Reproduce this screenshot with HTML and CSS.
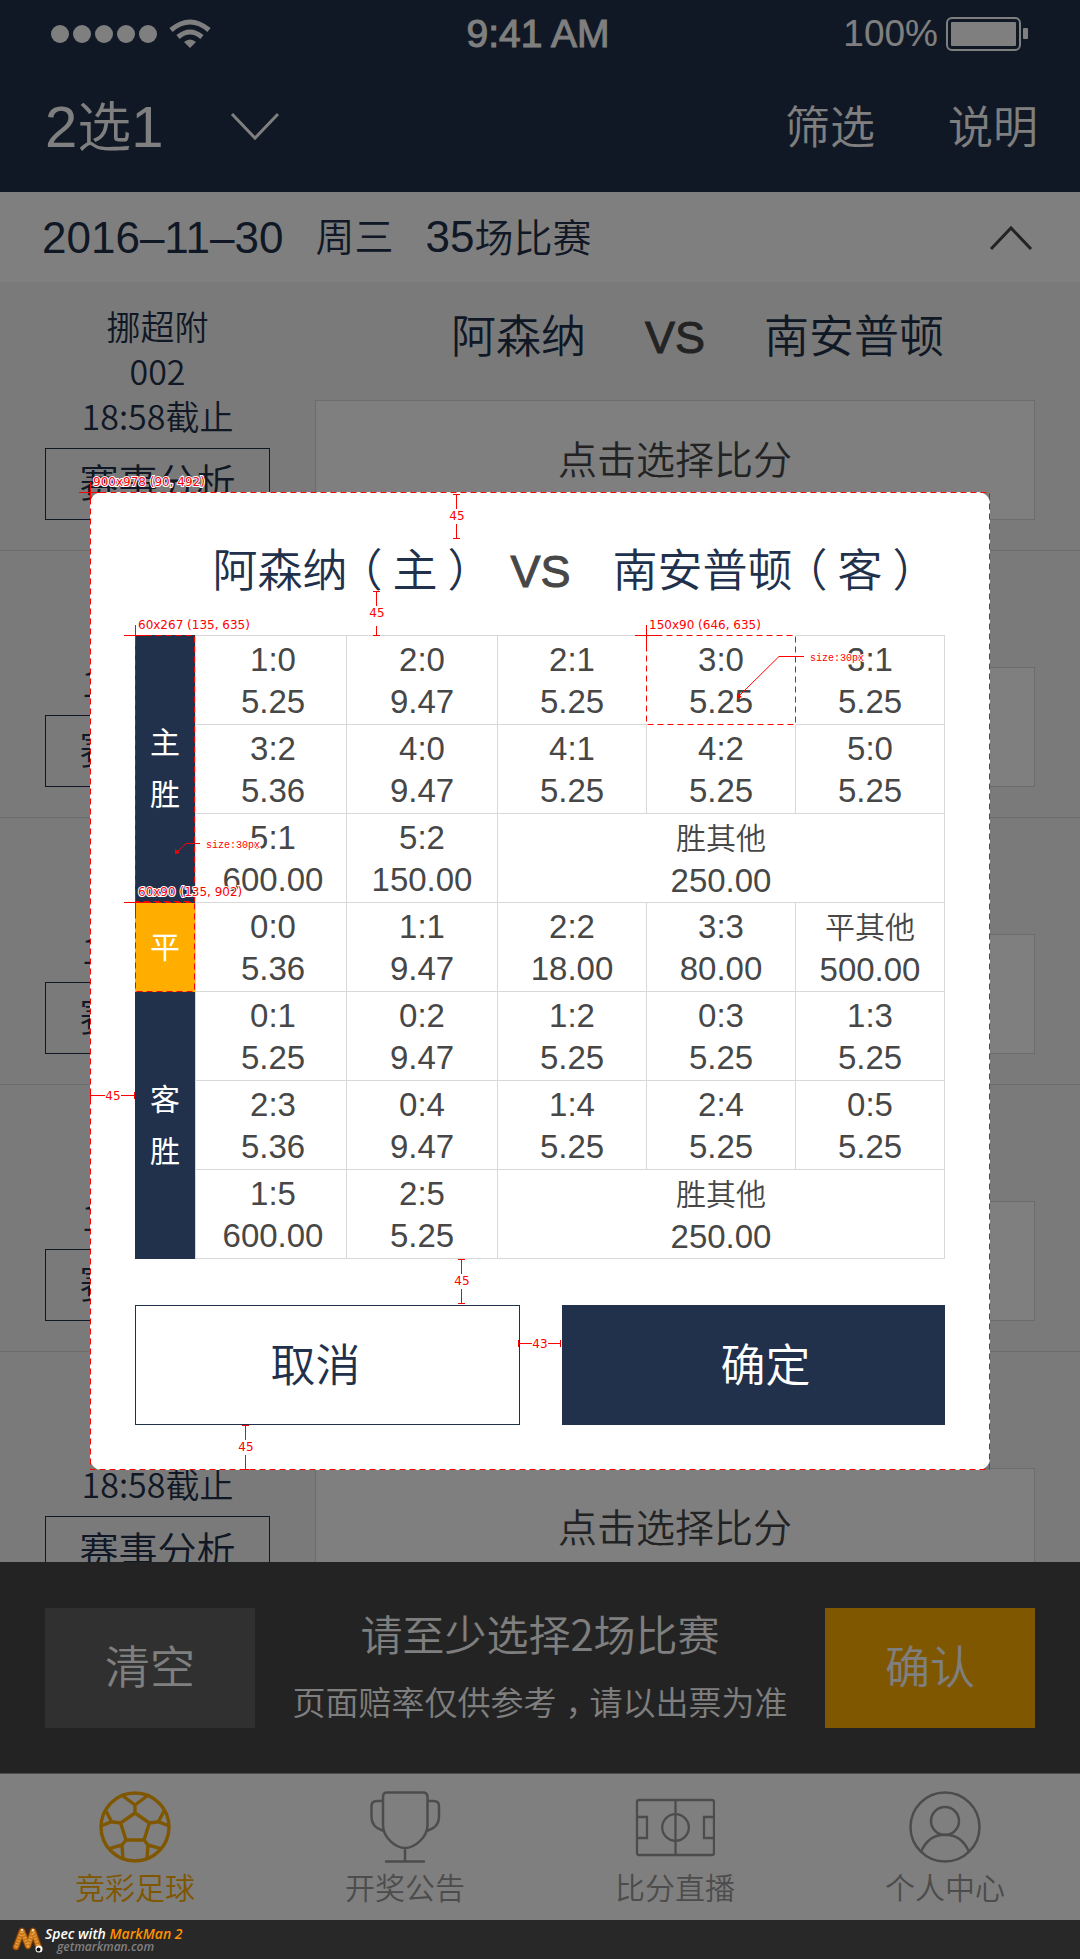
FILE: index.html
```html
<!DOCTYPE html>
<html lang="zh-CN">
<head>
<meta charset="utf-8">
<meta name="viewport" content="width=device-width">
<title>竞彩足球</title>
<link rel="stylesheet" href="styles.css">
</head>
<body>
<div class="page">
  <div class="app">
    <header class="top">
      <div class="status">
        <div class="signal">
          <i class="dot"></i><i class="dot"></i><i class="dot"></i><i class="dot"></i><i class="dot"></i>
          <svg class="wifi" width="42" height="30" viewBox="0 0 42 30" fill="none" stroke="#fff" stroke-width="5">
            <path d="M2 11Q21-5 40 11M9 18Q21 8 33 18"/><path d="M15 23Q21 18 27 23L21 29Z" fill="#fff" stroke="none"/>
          </svg>
        </div>
        <div class="clock">9:41 AM</div>
        <div class="power">100%
          <svg width="83" height="34" viewBox="0 0 83 34">
            <rect x="1" y="1" width="73" height="32" rx="5" fill="none" stroke="#fff" stroke-width="2"/>
            <rect x="5" y="5" width="65" height="24" rx="1" fill="#fff"/>
            <rect x="77" y="11" width="5" height="11" rx="1" fill="#fff"/>
          </svg>
        </div>
      </div>
      <nav class="titlebar">
        <button class="mode" type="button"><span><span class="mode-num">2</span>选<span class="mode-num">1</span></span>
          <svg width="50" height="30" viewBox="0 0 50 30" fill="none" stroke="#fff" stroke-width="3"><path d="M2 2L25 26L48 2"/></svg>
        </button>
        <div class="actions"><a href="#filter">筛选</a><a href="#help">说明</a></div>
      </nav>
    </header>

    <button class="day" type="button">
      <span class="day-num">2016–11–30</span><span>周三</span><span><span class="day-num">35</span>场比赛</span>
      <svg class="fold" width="44" height="26" viewBox="0 0 44 26" fill="none" stroke="#474747" stroke-width="3"><path d="M2 24L22 3L42 24"/></svg>
    </button>

    <main class="matches">
      <article class="match">
        <div class="info"><p>挪超附<br>002<br>18:58截止</p><button class="analyse" type="button">赛事分析</button></div>
        <div class="fixture"><div class="teams"><span>阿森纳</span><span class="vs">VS</span><span>南安普顿</span></div><button class="pick" type="button">点击选择比分</button></div>
      </article>
      <article class="match">
        <div class="info"><p>挪超附<br>002<br>18:58截止</p><button class="analyse" type="button">赛事分析</button></div>
        <div class="fixture"><div class="teams"><span>阿森纳</span><span class="vs">VS</span><span>南安普顿</span></div><button class="pick" type="button">点击选择比分</button></div>
      </article>
      <article class="match">
        <div class="info"><p>挪超附<br>002<br>18:58截止</p><button class="analyse" type="button">赛事分析</button></div>
        <div class="fixture"><div class="teams"><span>阿森纳</span><span class="vs">VS</span><span>南安普顿</span></div><button class="pick" type="button">点击选择比分</button></div>
      </article>
      <article class="match">
        <div class="info"><p>挪超附<br>002<br>18:58截止</p><button class="analyse" type="button">赛事分析</button></div>
        <div class="fixture"><div class="teams"><span>阿森纳</span><span class="vs">VS</span><span>南安普顿</span></div><button class="pick" type="button">点击选择比分</button></div>
      </article>
      <article class="match">
        <div class="info"><p>挪超附<br>002<br>18:58截止</p><button class="analyse" type="button">赛事分析</button></div>
        <div class="fixture"><div class="teams"><span>阿森纳</span><span class="vs">VS</span><span>南安普顿</span></div><button class="pick" type="button">点击选择比分</button></div>
      </article>
    </main>

    <section class="betbar">
      <button class="bet-btn" type="button">清空</button>
      <div class="bet-text"><p class="bet-main">请至少选择2场比赛</p><p class="bet-note">页面赔率仅供参考<span class="comma">，</span>请以出票为准</p></div>
      <button class="bet-btn bet-ok" type="button">确认</button>
    </section>

    <nav class="tabs">
      <a class="tab active" href="#football">
        <svg width="72" height="72" viewBox="0 0 72 72"><g fill="none" stroke="currentColor" stroke-width="3.4" stroke-linejoin="round">
          <circle cx="36" cy="36" r="34"/>
          <path d="M36 22L50.4 32L45 49H27L21.600 32ZM36 22V14M24 5L36 14L48 5M50.400 32L59.400 30.700M65 20L59.400 30.700L70 35M21.600 32L12.600 30.700M7 20L12.600 30.700L2 35M45 49L49 54M61 57.300L49 54L48 68M27 49L23 54M11 57.300L23 54L24 68"/></g></svg>
        竞彩足球</a>
      <a class="tab" href="#results">
        <svg width="72" height="72" viewBox="0 0 72 72"><g fill="none" stroke="currentColor" stroke-width="2.500" stroke-linecap="round">
          <path d="M18 1.500H54Q58.500 1.500 58.500 6V34C58.500 47 45 57 36 57S14 47 14 34V6Q14 1.500 18 1.500ZM14 10H8Q2.500 10 2.500 15V26Q2.500 36 13.500 39.500M58.500 10H64.500Q70 10 70 15V26Q70 36 59 39.500M36 57V70M17 70.500H55"/></g></svg>
        开奖公告</a>
      <a class="tab" href="#live">
        <svg width="80" height="72" viewBox="0 0 80 72"><g fill="none" stroke="currentColor" stroke-width="2.300">
          <rect x="2" y="9" width="77" height="55" rx="2"/><path d="M40.500 9V64M2 26H12V47H2M79 26H69V47H79"/><circle cx="40.500" cy="36.500" r="13.300"/></g></svg>
        比分直播</a>
      <a class="tab" href="#me">
        <svg width="72" height="72" viewBox="0 0 72 72"><g fill="none" stroke="currentColor" stroke-width="2.500">
          <circle cx="36" cy="36" r="34.500"/><circle cx="36" cy="30" r="14"/><path d="M12 61C17 49 26 43.800 36 43.800S55 49 60 61"/></g></svg>
        个人中心</a>
    </nav>

    <div class="mask">
      <section class="dialog" role="dialog" aria-modal="true">
        <h2 class="dialog-title"><span>阿森纳<span class="open">（</span>主<span class="close">）</span></span><span class="vs">VS</span><span>南安普顿<span class="open">（</span>客<span class="close">）</span></span></h2>
        <table class="odds">
          <colgroup><col class="c-side"><col class="c-first"><col class="c-second"><col><col><col></colgroup>
          <tr><th rowspan="3" scope="rowgroup">主<br>胜</th><td class="lead">1:0<br>5.25</td><td>2:0<br>9.47</td><td>2:1<br>5.25</td><td>3:0<br>5.25</td><td>3:1<br>5.25</td></tr>
          <tr><td class="lead">3:2<br>5.36</td><td>4:0<br>9.47</td><td>4:1<br>5.25</td><td>4:2<br>5.25</td><td>5:0<br>5.25</td></tr>
          <tr><td class="lead">5:1<br>600.00</td><td>5:2<br>150.00</td><td colspan="3"><span class="other">胜其他</span><br>250.00</td></tr>
          <tr><th class="draw" scope="row">平</th><td class="lead">0:0<br>5.36</td><td>1:1<br>9.47</td><td>2:2<br>18.00</td><td>3:3<br>80.00</td><td><span class="other">平其他</span><br>500.00</td></tr>
          <tr><th rowspan="3" scope="rowgroup">客<br>胜</th><td class="lead">0:1<br>5.25</td><td>0:2<br>9.47</td><td>1:2<br>5.25</td><td>0:3<br>5.25</td><td>1:3<br>5.25</td></tr>
          <tr><td class="lead">2:3<br>5.36</td><td>0:4<br>9.47</td><td>1:4<br>5.25</td><td>2:4<br>5.25</td><td>0:5<br>5.25</td></tr>
          <tr><td class="lead">1:5<br>600.00</td><td>2:5<br>5.25</td><td colspan="3"><span class="other">胜其他</span><br>250.00</td></tr>
        </table>
        <div class="choices">
          <button class="cancel" type="button">取消</button>
          <button class="confirm" type="button">确定</button>
        </div>

        <!-- spec marks, in page coordinates -->
        <svg class="marks" viewBox="90 492 900 978">
          <g fill="none" stroke="#f00">
            <g stroke-dasharray="6 4">
              <path d="M90.500 492.500H989.500V1469.500H90.500Z"/>
              <path d="M135.500 635.500H194.500V901.500H135.500Z"/>
              <path d="M135.500 902.500H194.500V991.500H135.500Z"/>
              <path class="knock" d="M646.500 635.500H795.500V724.500H646.500Z"/>
              <path d="M646.500 635.500H795.500V724.500H646.500Z"/>
            </g>
            <path d="M79 492.500H103M90.500 482V502M124 635.500H146M135.500 625V646M124 902.500H146M135.500 892V913M635 635.500H661M646.500 625V646"/>
            <path d="M453 494.500H460M456.500 494V509M456.500 524V538M453 538.500H460"/>
            <path d="M373 591.500H380M376.500 591V606M376.500 626V635M373 635.500H380"/>
            <path d="M458 1259.500H465M461.500 1260V1274M461.500 1289V1303M458 1303.500H465"/>
            <path d="M242 1425.500H249M245.500 1426V1440M245.500 1455V1469M242 1469.500H249"/>
            <path d="M90.500 1092V1099M91 1095.500H105M121 1095.500H134M134.500 1092V1099"/>
            <path d="M518.500 1340V1347M519 1343.500H532M548 1343.500H561M560.500 1340V1347"/>
            <path d="M200 843.500H186L177 852M804 656.500H779L739 696"/>
          </g>
          <path fill="#f00" d="M175 849L180 853L175 854ZM737 693L742 697L737 699Z"/>
          <g class="size">
            <text x="93" y="486">900x978 (90, 492)</text>
            <text x="138" y="629">60x267 (135, 635)</text>
            <text x="138" y="896">60x90 (135, 902)</text>
            <text x="649" y="629">150x90 (646, 635)</text>
            <g text-anchor="middle">
              <text x="457" y="520">45</text><text x="377" y="617">45</text><text x="462" y="1285">45</text>
              <text x="246" y="1451">45</text><text x="113" y="1100">45</text><text x="540" y="1348">43</text>
            </g>
          </g>
          <g class="note"><text x="206" y="848">size:30px</text><text x="810" y="661">size:30px</text></g>
        </svg>
      </section>
    </div>
  </div>

  <footer class="credit">
    <svg width="32" height="28" viewBox="0 0 32 28" fill="none" stroke-linecap="round" stroke-linejoin="round">
      <path d="M4 21L10 5L16 20L21 5L27 22" stroke="#7a3c05" stroke-width="7"/>
      <path d="M4 21L10 5L16 20L21 5L27 22" stroke="#c8761a" stroke-width="5"/>
      <path d="M4 21L10 5L16 20L21 5L27 22" stroke="#eda94a" stroke-width="3" stroke-linecap="butt" stroke-dasharray="1 2"/>
      <circle cx="10" cy="4" r="1" fill="#fff"/><circle cx="21" cy="4" r="1" fill="#fff"/>
      <circle cx="27" cy="23" r="3.500" fill="#fff"/><circle cx="26.500" cy="23.500" r="2" fill="#111"/>
    </svg>
    <div><p class="credit-main">Spec with <b>MarkMan 2</b></p><p class="credit-site">getmarkman.com</p></div>
  </footer>
</div>
</body>
</html>
```

FILE: styles.css
```css
:root {
  --navy: #22314b;
  --gold: #ffae00;
  --ink: #474747;
  --line: #d8d8d8;
  --cjk: "Liberation Sans", "Noto Sans CJK SC", sans-serif;
}

* { box-sizing: border-box; }

body, p, h2 { margin: 0; }

body {
  background: #282828;
  color: var(--navy);
  font-family: var(--cjk);
  font-weight: 350;
  line-height: 1.2;
}

button {
  padding: 0;
  border: 0;
  border-radius: 0;
  background: none;
  color: inherit;
  font: inherit;
}

a { color: inherit; text-decoration: none; }

svg { flex: none; }

.page { display: flex; flex-direction: column; height: 100vh; }

.app {
  position: relative;
  display: flex;
  flex: 1 1 0;
  flex-direction: column;
  min-height: 0;
}

/* status bar and title */
.top { height: 192px; flex: none; background: var(--navy); color: #fff; }

.status {
  display: grid;
  grid-template-columns: 1fr auto 1fr;
  align-items: center;
  height: 68px;
  padding: 0 51px;
}

.signal { display: flex; align-items: center; gap: 4px; }

.dot { width: 18px; height: 18px; border-radius: 50%; background: #fff; }

.wifi { margin-left: 8px; }

.clock { padding-right: 4px; font-size: 39px; -webkit-text-stroke: 1px #fff; }

.power { display: flex; align-items: center; justify-content: flex-end; gap: 8px; font-size: 37px; }

.titlebar {
  display: flex;
  align-items: center;
  justify-content: space-between;
  height: 118px;
  padding: 0 42px 0 45px;
}

.mode { display: flex; align-items: center; gap: 66px; font-size: 54px; line-height: 64px; }

.mode-num { font-size: 58px; }

.actions { display: flex; gap: 73px; padding-top: 4px; font-size: 45px; }

/* day heading */
.day {
  display: flex;
  align-items: center;
  gap: 32px;
  flex: none;
  height: 90px;
  padding: 2px 47px 0 42px;
  background: #fff;
  font-size: 39px;
  line-height: 48px;
}

.day-num { font-size: 44px; }

.fold { margin-left: auto; }

/* match list */
.matches { flex: 1 1 0; min-height: 0; overflow: hidden; padding-top: 2px; background: #f5f5f5; }

.match {
  display: flex;
  gap: 45px;
  height: 267px;
  padding: 19px 45px 30px;
  border-bottom: 1px solid var(--line);
}

.info {
  display: flex;
  flex-direction: column;
  justify-content: space-between;
  width: 225px;
  font: 350 34px/45px "Noto Sans CJK SC", sans-serif;
  text-align: center;
}

.analyse { height: 72px; border: 1px solid var(--navy); font: 350 39px/48px var(--cjk); }

.fixture { display: flex; flex: 1; flex-direction: column; justify-content: space-between; }

.teams {
  display: grid;
  grid-template-columns: 1fr auto 1fr;
  gap: 59px;
  font-size: 45px;
  line-height: 70px;
}

.teams span:first-child { text-align: right; }

.vs { color: var(--ink); -webkit-text-stroke: 1px var(--ink); }

.pick {
  height: 120px;
  padding-top: 3px;
  border: 1px solid var(--line);
  background: #fff;
  color: var(--ink);
  font-size: 39px;
}

/* bet bar */
.betbar {
  display: flex;
  flex: none;
  align-items: center;
  justify-content: space-between;
  height: 211px;
  padding: 0 45px;
  background: #474747;
  color: #fff;
}

.bet-btn { width: 210px; height: 120px; padding-top: 3px; background: #606060; font-size: 45px; }

.bet-ok { background: var(--gold); }

.bet-text { padding-bottom: 3px; text-align: center; font-family: "Noto Sans CJK SC", sans-serif; }

.bet-main { font-size: 42px; line-height: 70px; }

.bet-note { font-size: 33px; line-height: 66px; }

.comma { margin: 0 -9px 0 9px; }

/* tab bar */
.tabs {
  display: grid;
  grid-template-columns: repeat(4, 1fr);
  flex: none;
  height: 147px;
  border-top: 1px solid #999;
  background: #fff;
  color: #999;
}

.tab {
  display: flex;
  flex-direction: column;
  align-items: center;
  gap: 8px;
  padding-top: 17px;
  font-size: 30px;
  line-height: 36px;
}

.active { color: var(--gold); }

/* score dialog */
.mask {
  position: absolute;
  inset: 0;
  display: flex;
  align-items: center;
  padding: 42px 90px 0;
  background: rgba(0, 0, 0, 0.5);
}

.dialog {
  position: relative;
  flex: 1;
  padding: 45px;
  border-radius: 12px;
  background: #fff;
}

.dialog-title {
  display: flex;
  justify-content: center;
  gap: 28px;
  margin-bottom: 28px;
  padding-left: 60px;
  font-size: 45px;
  font-weight: 350;
  line-height: 70px;
  white-space: nowrap;
}

.dialog-title .vs { margin-right: 14px; }

.open { margin: 0 10px 0 -10px; }

.close { margin: 0 -10px 0 10px; }

.odds {
  width: 100%;
  table-layout: fixed;
  border-spacing: 0;
  color: var(--ink);
  font-size: 33px;
  line-height: 42px;
  text-align: center;
}

.c-side { width: 60px; }

.c-first { width: 152px; }

.c-second { width: 151px; }

.odds td {
  height: 89px;
  padding: 2px 0 0;
  border-right: 1px solid var(--line);
  border-bottom: 1px solid var(--line);
}

.odds tr:first-child td { height: 90px; border-top: 1px solid var(--line); }

.odds .lead { padding-left: 4px; border-left: 1px solid var(--line); }

.odds th {
  padding: 0;
  background: var(--navy);
  color: #fff;
  font-size: 30px;
  font-weight: 400;
  line-height: 52px;
}

.odds .draw { background: var(--gold); }

.other { font-size: 30px; }

.choices { display: flex; gap: 42px; margin-top: 46px; }

.choices button { flex: 1; height: 120px; padding-top: 4px; font-size: 45px; }

.choices .cancel { padding-right: 24px; border: 1px solid var(--navy); }

.choices .confirm { padding-left: 24px; background: var(--navy); color: #fff; }

/* spec marks */
.marks { position: absolute; inset: 0; width: 100%; height: 100%; overflow: visible; pointer-events: none; }

.marks .knock { stroke: #fff; stroke-dasharray: none; }

.marks text { fill: #f00; stroke: #fff; stroke-width: 2px; paint-order: stroke; }

.size { font: 12px "DejaVu Sans", sans-serif; }

.note { font: 10px "Liberation Mono", monospace; }

/* footer */
.credit {
  display: flex;
  flex: none;
  gap: 1px;
  height: 39px;
  padding: 6px 12px 0;
  background: #282828;
  color: #fff;
  font-family: "Open Sans", sans-serif;
  font-style: italic;
  font-weight: 600;
}

.credit-main { font-size: 14px; line-height: 15px; }

.credit-main b { color: #ff9000; font-weight: 600; }

.credit-site { padding-left: 12px; color: #808080; font-size: 12px; line-height: 12px; }
```
